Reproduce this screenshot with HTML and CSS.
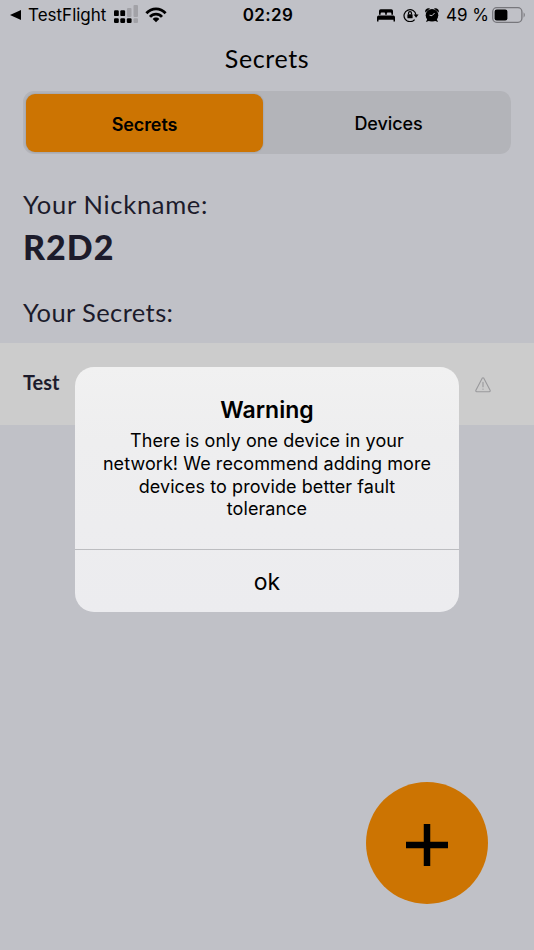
FILE: index.html
```
<!DOCTYPE html>
<html lang="en">
<head>
  <meta charset="UTF-8">
  <meta name="viewport" content="width=device-width, initial-scale=1.0">
  <title>Secrets</title>
  <link rel="stylesheet" href="styles.css">
</head>
<body>

  <!-- STATUS BAR -->
  <div class="status-bar">
    <div class="status-left">
      <svg class="back-arrow" width="12" height="10" viewBox="0 0 12 10"><path d="M0 5 11 0v10z"/></svg>
      <span class="back-app">TestFlight</span>
      <svg class="signal" width="25" height="19" viewBox="0 0 25 19">
        <g fill="#a2a2a7">
          <rect x="13" y="3" width="4.5" height="9" rx="1"/>
          <rect x="19.5" y="0" width="4.5" height="12" rx="1"/>
          <rect x="19.5" y="13.2" width="4.5" height="4.8" rx="1"/>
        </g>
        <rect x="0" y="5.3" width="4.8" height="5.8" rx="1.2"/>
        <rect x="6.3" y="5.3" width="4.8" height="5.8" rx="1.2"/>
        <rect x="0" y="13.2" width="4.8" height="4.8" rx="1.2"/>
        <rect x="6.3" y="13.2" width="4.8" height="4.8" rx="1.2"/>
        <rect x="12.8" y="13.2" width="4.8" height="4.8" rx="1.2"/>
      </svg>
      <svg class="wifi" width="22" height="16" viewBox="0 0 22 16" fill="none" stroke="#000" stroke-width="2.8">
        <path d="M1.4 6.2C6.8.3 15.2.3 20.6 6.2"/>
        <path d="M5 9.9c3.4-3.7 8.6-3.7 12 0"/>
        <path d="M11 15.3 7.7 12c1.8-1.9 4.8-1.9 6.6 0z" fill="#000" stroke="none"/>
      </svg>
    </div>
    <span class="time">02:29</span>
    <div class="status-right">
      <svg class="bed" width="18" height="13" viewBox="0 0 18 13">
        <path d="M2 5.7V2Q2 .3 3.7.3h10.6Q16 .3 16 2v3.7h-1.6V4.5q0-1-1-1h-2.6q-1 0-1 1v1.2H8.2V4.5q0-1-1-1H4.6q-1 0-1 1v1.2z"/>
        <path d="M0 12.6V8.3Q0 6.5 1.8 6.5h14.4q1.8 0 1.8 1.8v4.3h-1.5v-1.8h-15v1.8z"/>
      </svg>
      <svg class="lock" width="16" height="14" viewBox="0 0 16 14" fill="none" stroke="#000" stroke-width="1.2">
        <path d="M11.6 11.6A6 6 0 1 1 13 7"/>
        <path d="M10.6 6.5h5l-2.5 3.3z" fill="#000" stroke="none"/>
        <rect x="4.4" y="6.3" width="5.2" height="4" rx=".6" fill="#000" stroke="none"/>
        <path d="M5.5 6.5V5.2a1.5 1.5 0 0 1 3 0v1.3"/>
      </svg>
      <svg class="alarm" width="14" height="14" viewBox="0 0 14 14">
        <circle cx="7" cy="7.3" r="6.3"/>
        <path d="M.4 4.6C-.7 1.500 2.300-.8 5 .6zM13.600 4.600C14.700 1.500 11.700-.8 9 .6zM1 14l1.500-3.500 2.500 2zM13 14l-1.500-3.500-2.500 2z"/>
        <path d="M7 7.700 9.600 5M7 7.700 4.500 7.200" fill="none" stroke="#c1c1c7"/>
      </svg>
      <span class="percent">49 %</span>
      <svg class="battery" width="34" height="16" viewBox="0 0 34 16">
        <rect x=".7" y=".7" width="29.2" height="14.6" rx="4" fill="none" stroke="#77777c" stroke-width="1.3"/>
        <rect x="2.6" y="2.6" width="12.8" height="10.8" rx="2.2"/>
        <path d="M31.6 5.3q2.4 2.7 0 5.4z" fill="#77777c"/>
      </svg>
    </div>
  </div>

  <!-- TITLE -->
  <header>
    <h1>Secrets</h1>
  </header>

  <!-- TABS -->
  <nav class="tabs">
    <button class="tab active">Secrets</button>
    <button class="tab">Devices</button>
  </nav>

  <!-- PROFILE -->
  <section class="profile">
    <p class="label">Your Nickname:</p>
    <p class="nickname">R2D2</p>
    <p class="label secrets-label">Your Secrets:</p>
  </section>

  <!-- SECRETS LIST -->
  <ul class="secrets">
    <li>
      <span>Test</span>
      <svg class="warning-icon" width="16" height="16" viewBox="0 0 16 16" fill="none" stroke="#99999c" stroke-width="1.1" stroke-linejoin="round" stroke-linecap="round">
        <path d="M7.2 1.2Q8 .2 8.8 1.2L15.1 13.2Q15.6 14.7 14.2 14.8H1.8Q.4 14.7.9 13.2z"/>
        <path d="M8 5.3v4.5M8 12v.2"/>
      </svg>
    </li>
  </ul>

  <!-- ADD BUTTON -->
  <button class="add-btn" aria-label="Add secret">
    <svg width="42" height="42" viewBox="0 0 42 42" stroke="#000" stroke-width="6.5"><path d="M0 21h42M21 0v42"/></svg>
  </button>

  <!-- ALERT -->
  <div class="alert">
    <div class="alert-body">
      <h2>Warning</h2>
      <p>There is only one device in your<br>network! We recommend adding more<br>devices to provide better fault<br>tolerance</p>
    </div>
    <button class="alert-btn">ok</button>
  </div>

</body>
</html>
```
FILE: styles.css
```
/* ===== GENERAL ===== */
* {
  box-sizing: border-box;
}
body {
  margin: 0;
  height: 950px;
  position: relative;
  overflow: hidden;
  background: #c0c1c7;
  color: #000;
  font-family: Inter, sans-serif;
}
h1, h2, p, ul {
  margin: 0;
  padding: 0;
}
button {
  border: none;
  padding: 0;
  color: #000;
  font-family: inherit;
}
svg {
  display: block;
  flex: none;
}

/* ===== STATUS BAR ===== */
.status-bar {
  display: grid;
  grid-template-columns: 1fr auto 1fr;
  align-items: center;
  height: 30px;
  padding: 0 8px 0 10px;
  font-size: 17px;
  white-space: nowrap;
}
.status-left, .status-right {
  display: flex;
  align-items: center;
}
.status-right {
  justify-content: flex-end;
}
.back-app {
  margin-left: 6px;
  width: 86px;
}
.signal {
  margin-top: -2px;
}
.wifi {
  margin-left: 6px;
}
.time {
  font-size: 17px;
  font-weight: 600;
  letter-spacing: 0.4px;
}
.lock {
  margin-left: 8px;
}
.alarm {
  margin-left: 6px;
}
.percent {
  margin-left: 7px;
  width: 46px;
}

/* ===== HEADER ===== */
header {
  height: 61px;
  padding-top: 12px;
  text-align: center;
}
h1 {
  font: 400 25px/32px Lato, sans-serif;
  letter-spacing: 0.6px;
}

/* ===== TABS ===== */
.tabs {
  display: flex;
  margin: 0 23px;
  height: 63px;
  padding: 3px;
  border-radius: 11px;
  background: #b3b4b9;
}
.tab {
  flex: 1;
  padding: 2px 0 0 6px;
  background: none;
  border-radius: 9px;
  font-size: 18px;
  font-weight: 500;
  letter-spacing: -0.1px;
}
.tab.active {
  flex: 0 0 237px;
  height: 58px;
  padding-left: 0;
  background: #cc7402;
  font-weight: 600;
  box-shadow: 0 0 2px rgba(0, 0, 0, 0.2);
}

/* ===== PROFILE ===== */
.profile {
  height: 189px;
  padding: 34px 23px 0;
  color: #1c1b2b;
  font-family: Lato, sans-serif;
}
.label {
  font-size: 25.5px;
  line-height: 32px;
  letter-spacing: 0.7px;
}
.nickname {
  margin-top: 5px;
  font-size: 34px;
  font-weight: 900;
  line-height: 44px;
  letter-spacing: 1px;
}
.secrets-label {
  margin-top: 27px;
  letter-spacing: 0.4px;
}

/* ===== SECRETS LIST ===== */
.secrets {
  list-style: none;
}
.secrets li {
  display: flex;
  justify-content: space-between;
  align-items: center;
  height: 82px;
  padding: 0 43px 4px 23px;
  background: #cccccc;
  color: #1c1b2b;
  font: 700 20px Lato, sans-serif;
}
.warning-icon {
  margin-top: 5px;
}

/* ===== ADD BUTTON ===== */
.add-btn {
  position: absolute;
  right: 46px;
  bottom: 46px;
  display: flex;
  align-items: center;
  justify-content: center;
  width: 122px;
  height: 122px;
  padding-top: 3px;
  border-radius: 50%;
  background: #cc7402;
}

/* ===== ALERT ===== */
.alert {
  position: absolute;
  top: 367px;
  left: 75px;
  width: 384px;
  height: 245px;
  border-radius: 19px;
  overflow: hidden;
  background: linear-gradient(#f1f1f1, #eeeeef 30%, #ececef);
  text-align: center;
}
.alert-body {
  height: 183px;
  padding-top: 28px;
  border-bottom: 1px solid #bcbdc0;
}
.alert h2 {
  font-size: 23px;
  font-weight: 600;
  line-height: 30px;
}
.alert p {
  margin-top: 5px;
  font-size: 18px;
  line-height: 22.8px;
  letter-spacing: 0.08px;
}
.alert-btn {
  display: block;
  width: 100%;
  height: 62px;
  padding-top: 1px;
  background: none;
  font-size: 23px;
}
```
